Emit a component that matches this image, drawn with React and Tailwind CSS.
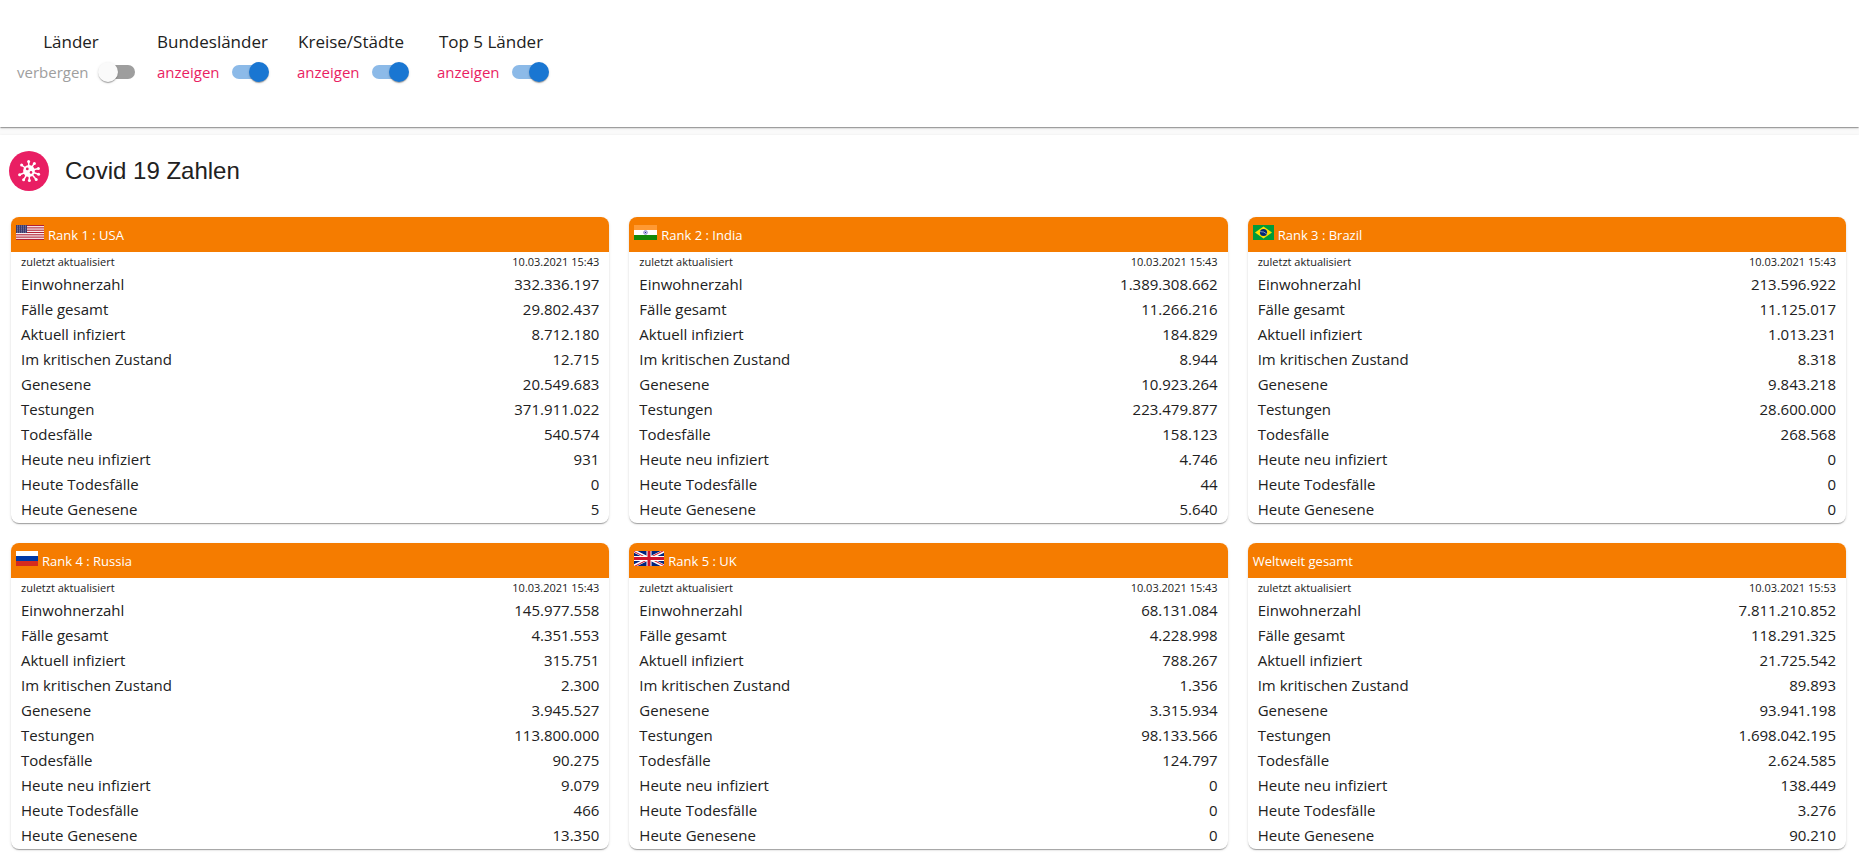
import { useState } from 'react';

const LABELS = [
  'Einwohnerzahl',
  'Fälle gesamt',
  'Aktuell infiziert',
  'Im kritischen Zustand',
  'Genesene',
  'Testungen',
  'Todesfälle',
  'Heute neu infiziert',
  'Heute Todesfälle',
  'Heute Genesene',
];

const CARDS = [
  {
    title: 'Rank 1 : USA',
    flag: 'us',
    updated: '10.03.2021 15:43',
    values: ['332.336.197', '29.802.437', '8.712.180', '12.715', '20.549.683', '371.911.022', '540.574', '931', '0', '5'],
  },
  {
    title: 'Rank 2 : India',
    flag: 'in',
    updated: '10.03.2021 15:43',
    values: ['1.389.308.662', '11.266.216', '184.829', '8.944', '10.923.264', '223.479.877', '158.123', '4.746', '44', '5.640'],
  },
  {
    title: 'Rank 3 : Brazil',
    flag: 'br',
    updated: '10.03.2021 15:43',
    values: ['213.596.922', '11.125.017', '1.013.231', '8.318', '9.843.218', '28.600.000', '268.568', '0', '0', '0'],
  },
  {
    title: 'Rank 4 : Russia',
    flag: 'ru',
    updated: '10.03.2021 15:43',
    values: ['145.977.558', '4.351.553', '315.751', '2.300', '3.945.527', '113.800.000', '90.275', '9.079', '466', '13.350'],
  },
  {
    title: 'Rank 5 : UK',
    flag: 'gb',
    updated: '10.03.2021 15:43',
    values: ['68.131.084', '4.228.998', '788.267', '1.356', '3.315.934', '98.133.566', '124.797', '0', '0', '0'],
  },
  {
    title: 'Weltweit gesamt',
    updated: '10.03.2021 15:53',
    values: ['7.811.210.852', '118.291.325', '21.725.542', '89.893', '93.941.198', '1.698.042.195', '2.624.585', '138.449', '3.276', '90.210'],
  },
];

const Flag = ({ code }) => {
  if (code === 'us') {
    return (
      <svg width="28" height="15" viewBox="0 0 28 15" aria-hidden="true">
        <rect width="28" height="15" fill="#fff" />
        {[0, 2, 4, 6, 8, 10, 12].map((i) => (
          <rect key={i} y={(i * 15) / 13} width="28" height={15 / 13} fill="#b22234" />
        ))}
        <rect width="11" height="8" fill="#3c3b6e" />
        {[1, 3, 5, 7].map((y) =>
          [1, 3, 5, 7, 9].map((x) => <circle key={`${x}-${y}`} cx={x + 0.5} cy={y} r="0.4" fill="#fff" />)
        )}
      </svg>
    );
  }
  if (code === 'in') {
    return (
      <svg width="23" height="15" viewBox="0 0 23 15" aria-hidden="true">
        <rect width="23" height="15" fill="#fff" />
        <rect width="23" height="5" fill="#ff9933" />
        <rect y="10" width="23" height="5" fill="#138808" />
        <circle cx="11.5" cy="7.5" r="1.9" fill="#c9c9ea" stroke="#5555b0" strokeWidth="0.5" />
        <circle cx="11.5" cy="7.5" r="0.6" fill="#000088" />
      </svg>
    );
  }
  if (code === 'br') {
    return (
      <svg width="21" height="15" viewBox="0 0 21 15" aria-hidden="true">
        <rect width="21" height="15" fill="#009b3a" />
        <path d="M10.5 1.6 L19 7.5 L10.5 13.4 L2 7.5 Z" fill="#fedf00" />
        <circle cx="10.5" cy="7.5" r="3.6" fill="#002776" />
        <path d="M7.1 6.6 Q11 6.2 13.8 9" fill="none" stroke="#fff" strokeWidth="0.5" />
      </svg>
    );
  }
  if (code === 'ru') {
    return (
      <svg width="22" height="15" viewBox="0 0 22 15" aria-hidden="true">
        <rect width="22" height="5" fill="#fff" />
        <rect y="5" width="22" height="5" fill="#0039a6" />
        <rect y="10" width="22" height="5" fill="#d52b1e" />
      </svg>
    );
  }
  return (
    <svg width="30" height="15" viewBox="0 0 60 30" aria-hidden="true">
      <clipPath id="saltire">
        <path d="M30,15 h30 v15 z v15 h-30 z h-30 v-15 z v-15 h30 z" />
      </clipPath>
      <rect width="60" height="30" fill="#00247d" />
      <path d="M0,0 L60,30 M60,0 L0,30" stroke="#fff" strokeWidth="6" />
      <path d="M0,0 L60,30 M60,0 L0,30" clipPath="url(#saltire)" stroke="#cf142b" strokeWidth="4" />
      <path d="M30,0 v30 M0,15 h60" stroke="#fff" strokeWidth="10" />
      <path d="M30,0 v30 M0,15 h60" stroke="#cf142b" strokeWidth="6" />
    </svg>
  );
};

// tips of the spikes, all drawn outwards from the middle of the virus
const SPIKES = [
  [11.6, 2.4],
  [17.4, 4.4],
  [21.4, 9.6],
  [21.6, 15.2],
  [19.2, 20.6],
  [12.4, 21.4],
  [6.6, 20.8],
  [2.6, 15.8],
  [4.6, 6],
];

const VirusIcon = () => (
  <svg width="24" height="24" viewBox="0 0 24 24" aria-hidden="true">
    {SPIKES.map(([x, y]) => (
      <g key={`${x}-${y}`}>
        <path d={`M12 12 L${x} ${y}`} stroke="#fff" strokeWidth="1.5" />
        <circle cx={x} cy={y} r="1.5" fill="#fff" />
      </g>
    ))}
    <circle cx="12" cy="12" r="5.9" fill="#fff" />
    <circle cx="10.3" cy="9.9" r="1.4" fill="#e91e63" />
    <circle cx="14" cy="13.4" r="1.3" fill="#e91e63" />
  </svg>
);

const ToggleGroup = ({ id, title, checked, onChange }) => {
  return (
    <div className="w-[108px]">
      <p className="text-center text-[17px] leading-6 whitespace-nowrap">{title}</p>
      <div className="flex items-center h-9 w-max">
        <label htmlFor={id} className={`text-[15px] leading-6 ${checked ? "text-[#e91e63]" : "text-[#9e9e9e]"}`}>
          {checked ? 'anzeigen' : 'verbergen'}
        </label>
        <input
          id={id}
          type="checkbox"
          aria-label={title}
          checked={checked}
          onChange={onChange}
          className="relative appearance-none mx-3 w-[34px] h-[14px] rounded-full cursor-pointer bg-[#9e9e9e] checked:bg-[#8cbae8] before:absolute before:-top-[3px] before:-left-[3px] before:size-5 before:rounded-full before:bg-[#fafafa] before:shadow-[0_2px_1px_-1px_rgba(0,0,0,0.2),0_1px_1px_rgba(0,0,0,0.14),0_1px_3px_rgba(0,0,0,0.12)] checked:before:left-[17px] checked:before:bg-[#1976d2]"
        />
      </div>
    </div>
  );
};

const CountryCard = ({ card }) => {
  return (
    <section className="rounded-[8px] overflow-hidden pb-px bg-white shadow-[0_2px_1px_-1px_rgba(0,0,0,0.2),0_1px_1px_rgba(0,0,0,0.14),0_1px_3px_rgba(0,0,0,0.12)]">
      <header className="flex items-start gap-1 h-[35px] px-[5px] pt-2 bg-[#f57c00] text-white">
        {card.flag && <Flag code={card.flag} />}
        <h2 className="text-[13px] leading-5">{card.title}</h2>
      </header>
      <table className="w-full">
        <tbody>
          <tr className="h-5 text-[11px] leading-5">
            <th scope="row" className="pl-[10px] text-left font-normal">zuletzt aktualisiert</th>
            <td className="pr-[10px] text-right">{card.updated}</td>
          </tr>
          {LABELS.map((label, index) => (
            <tr key={label} className="text-[15px] leading-[25px]">
              <th scope="row" className="pl-[10px] text-left font-normal">{label}</th>
              <td className="pr-[10px] text-right">{card.values[index]}</td>
            </tr>
          ))}
        </tbody>
      </table>
    </section>
  );
};

const App = () => {
  const [toggles, setToggles] = useState([
    { id: 'laender', title: 'Länder', checked: false },
    { id: 'bundeslaender', title: 'Bundesländer', checked: true },
    { id: 'kreise', title: 'Kreise/Städte', checked: true },
    { id: 'top5', title: 'Top 5 Länder', checked: true },
  ]);

  const handleToggle = (id) => {
    setToggles(toggles.map((t) => (t.id === id ? { ...t, checked: !t.checked } : t)));
  };

  return (
    <div className="bg-[#fafafa] text-[#212121] font-['Open_Sans','Noto_Sans',sans-serif]">
      <div className="relative flex gap-8 pl-[17px] pt-[30px] pb-[37px] bg-white shadow-[0_2px_1px_-1px_rgba(0,0,0,0.2),0_1px_1px_rgba(0,0,0,0.14),0_1px_3px_rgba(0,0,0,0.12)]">
        {toggles.map((t) => (
          <ToggleGroup key={t.id} {...t} onChange={() => handleToggle(t.id)} />
        ))}
      </div>
      <main className="mt-2 min-h-[calc(100vh-135px)] pl-[11px] pr-[13px] pb-4 bg-white shadow-[0_1px_3px_rgba(0,0,0,0.12)]">
        <div className="flex items-center gap-4 h-[82px] pb-[10px] -ml-[2px]">
          <div className="flex items-center justify-center size-10 rounded-full bg-[#e91e63]">
            <VirusIcon />
          </div>
          <h1 className="text-2xl font-['Liberation_Sans',Arial,sans-serif]">Covid 19 Zahlen</h1>
        </div>
        <div className="grid grid-cols-3 gap-5">
          {CARDS.map((card) => (
            <CountryCard key={card.title} card={card} />
          ))}
        </div>
      </main>
    </div>
  );
};

export default App;
